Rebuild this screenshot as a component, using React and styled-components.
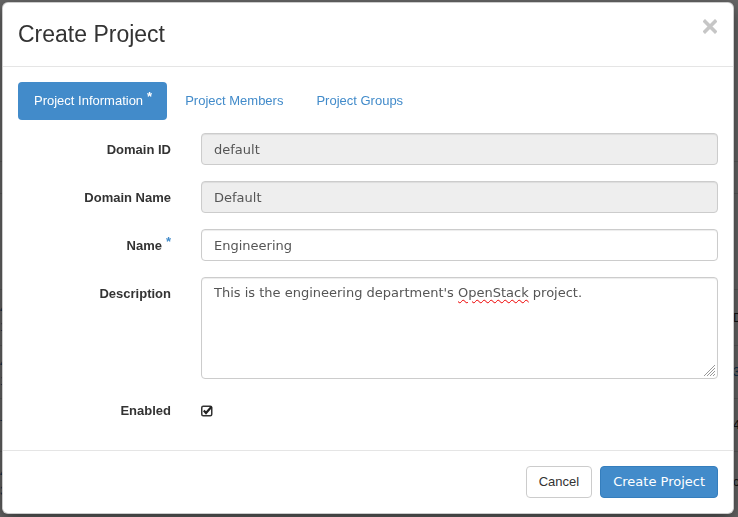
import React from 'react';
import styled, { createGlobalStyle } from 'styled-components';

const GlobalStyle = createGlobalStyle`
  html, body {
    margin: 0;
    padding: 0;
    overflow: hidden;
    background: #fff;
  }
  body {
    font-family: "Liberation Sans", Arial, sans-serif;
    font-size: 13px;
    color: #333;
  }
  * {
    box-sizing: border-box;
  }
`;

/* page behind the dialog */
const Page = styled.div`
  width: 830px;
  height: 517px;
  padding-top: 161px;
`;

const BgRow = styled.div`
  display: grid;
  grid-template-columns: 120px 613px 97px;
  align-items: center;
  height: ${(p) => p.$h}px;
  border-top: 1px solid #ddd;
  line-height: 18px;
`;

const BgLink = styled.div`
  color: #337ab7;
`;

const BgText = styled.div`
  color: ${(p) => (p.$link ? '#337ab7' : '#333')};
`;

const Backdrop = styled.div`
  position: fixed;
  inset: 0;
  background: rgba(0, 0, 0, 0.6);
`;

/* dialog */
const Modal = styled.div`
  position: fixed;
  top: 2px;
  left: 2px;
  width: 732px;
  background: #fff;
  border: 1px solid rgba(0, 0, 0, 0.2);
  border-radius: 6px;
  box-shadow: 0 5px 15px rgba(0, 0, 0, 0.5);
  display: flex;
  flex-direction: column;
`;

const Header = styled.div`
  display: flex;
  justify-content: space-between;
  align-items: flex-start;
  padding: 15px;
  border-bottom: 1px solid #e5e5e5;
`;

const Title = styled.h4`
  margin: 0;
  font-size: 23px;
  font-weight: normal;
  line-height: 33px;
  color: #333;
`;

const Close = styled.button`
  border: 0;
  background: none;
  padding: 0;
  margin: 1px 1px 0 0;
  width: 14px;
  height: 15px;
  cursor: pointer;
  display: flex;
`;

const Body = styled.div`
  padding: 15px 15px 23px;
`;

const Tabs = styled.ul`
  display: flex;
  list-style: none;
  margin: 0 0 13px;
  padding: 0;
  gap: 2px;
`;

const Tab = styled.li`
  padding: 10px 15px 10px 16px;
  line-height: 18px;
  font-size: 13px;
  border-radius: 4px;
  color: ${(p) => (p.$active ? '#fff' : '#428bca')};
  background: ${(p) => (p.$active ? '#428bca' : 'transparent')};
  cursor: pointer;
`;

const Star = styled.sup`
  color: ${(p) => p.$color || '#428bca'};
  font-size: 13px;
  font-weight: bold;
  line-height: 0;
  margin-left: 4px;
  position: relative;
  top: 1px;
`;

const Form = styled.div`
  display: flex;
  flex-direction: column;
  gap: 16px;
`;

const Row = styled.div`
  display: grid;
  grid-template-columns: 153px 1fr;
  column-gap: 30px;
  align-items: ${(p) => (p.$center ? 'center' : 'start')};
  min-height: ${(p) => (p.$center ? '32px' : 'auto')};
`;

const Label = styled.label`
  text-align: right;
  font-weight: bold;
  font-size: 13px;
  line-height: 18px;
  padding-top: ${(p) => (p.$center ? '0' : '8px')};
  color: #333;
`;

const Input = styled.input`
  display: block;
  width: 100%;
  height: 32px;
  padding: 6px 12px;
  font-family: "DejaVu Sans", Verdana, sans-serif;
  font-size: 13px;
  line-height: 18px;
  color: #555;
  background: ${(p) => (p.disabled ? '#eee' : '#fff')};
  border: 1px solid #ccc;
  border-radius: 4px;
  box-shadow: inset 0 1px 1px rgba(0, 0, 0, 0.075);
  outline: none;
  opacity: 1;
  -webkit-text-fill-color: #555;
`;

const TextArea = styled.div`
  position: relative;
  height: 102px;
  padding: 6px 12px;
  font-family: "DejaVu Sans", Verdana, sans-serif;
  font-size: 13px;
  line-height: 18px;
  color: #555;
  border: 1px solid #ccc;
  border-radius: 4px;
  box-shadow: inset 0 1px 1px rgba(0, 0, 0, 0.075);
`;

const Misspelt = styled.span`
  text-decoration: underline wavy #e00;
  text-decoration-thickness: 1px;
  text-underline-offset: 2px;
`;

const Grip = styled.svg`
  position: absolute;
  right: 1px;
  bottom: 1px;
`;

const Check = styled.div`
  display: flex;
  height: 32px;
  align-items: center;
`;

const Footer = styled.div`
  display: flex;
  justify-content: flex-end;
  gap: 8px;
  padding: 15px;
  border-top: 1px solid #e5e5e5;
`;

const Button = styled.button`
  height: 32px;
  padding: 6px 12px;
  font-size: 13px;
  line-height: 18px;
  border-radius: 4px;
  cursor: pointer;
  font-family: ${(p) => (p.$primary ? '"DejaVu Sans", Verdana, sans-serif' : '"Liberation Sans", Arial, sans-serif')};
  color: ${(p) => (p.$primary ? '#fff' : '#333')};
  background: ${(p) => (p.$primary ? '#428bca' : '#fff')};
  border: 1px solid ${(p) => (p.$primary ? '#357ebd' : '#ccc')};
`;

const bgRows = [
  { h: 32 },
  { h: 96 },
  { h: 56, a: '4', b: '1', c: 'Da', link: false },
  { h: 53, a: '4', b: '1', c: '3', link: true },
  { h: 53, a: 'T', b: '', c: '4', link: false },
  { h: 60, a: '4', b: '3', c: 'c1', link: false },
];

function App() {
  return (
    <>
      <GlobalStyle />
      <Page>
        {bgRows.map((r, i) => (
          <BgRow key={i} $h={r.h}>
            <BgLink>
              {r.a && <div>{r.a}</div>}
              {r.b && <div>{r.b}</div>}
            </BgLink>
            <div />
            <BgText $link={r.link}>{r.c}</BgText>
          </BgRow>
        ))}
      </Page>
      <Backdrop />
      <Modal role="dialog">
        <Header>
          <Title>Create Project</Title>
          <Close aria-label="Close">
            <svg width="14" height="15" viewBox="0 0 14 15">
              <path d="M2 2.5 L12 12.5 M12 2.5 L2 12.5" stroke="#c6c6c6" strokeWidth="3.6" strokeLinecap="square" />
            </svg>
          </Close>
        </Header>
        <Body>
          <Tabs>
            <Tab $active>
              Project Information<Star $color="#fff">*</Star>
            </Tab>
            <Tab>Project Members</Tab>
            <Tab>Project Groups</Tab>
          </Tabs>
          <Form>
            <Row>
              <Label>Domain ID</Label>
              <Input disabled value="default" readOnly />
            </Row>
            <Row>
              <Label>Domain Name</Label>
              <Input disabled value="Default" readOnly />
            </Row>
            <Row>
              <Label>
                Name<Star>*</Star>
              </Label>
              <Input value="Engineering" readOnly />
            </Row>
            <Row>
              <Label>Description</Label>
              <TextArea>
                This is the engineering department's <Misspelt>OpenStack</Misspelt> project.
                <Grip width="12" height="12" viewBox="0 0 12 12">
                  <path d="M11 3 L3 11 M11 6 L6 11 M11 9 L9 11 M11 0 L0 11" stroke="#999" strokeWidth="1" />
                </Grip>
              </TextArea>
            </Row>
            <Row $center>
              <Label $center>Enabled</Label>
              <Check>
                <svg width="13" height="12" viewBox="0 0 13 12">
                  <rect x="0.75" y="1.25" width="10" height="9.5" rx="1.5" fill="#fff" stroke="#333" strokeWidth="1.5" />
                  <path d="M2.8 5.6 L5 8 L10.5 1.8" fill="none" stroke="#222" strokeWidth="2.2" />
                </svg>
              </Check>
            </Row>
          </Form>
        </Body>
        <Footer>
          <Button>Cancel</Button>
          <Button $primary>Create Project</Button>
        </Footer>
      </Modal>
    </>
  );
}

export default App;
